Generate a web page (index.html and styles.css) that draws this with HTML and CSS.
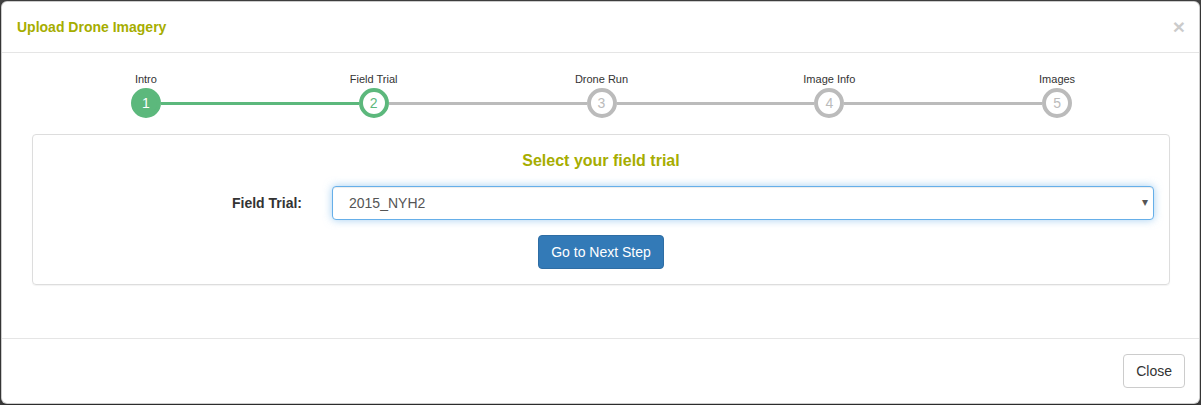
FILE: index.html
```html
<!DOCTYPE html>
<html>
<head>
<meta charset="utf-8">
<title>Upload Drone Imagery</title>
<link rel="stylesheet" href="styles.css">
</head>
<body>
<div class="modal">
  <div class="modal-header">
    <h4 class="modal-title">Upload Drone Imagery</h4>
    <button class="close" type="button">&times;</button>
  </div>
  <div class="modal-body">
    <div class="steps">
      <div class="step">
        <div class="step-label">Intro</div>
        <div class="track">
          <span class="seg seg-none"></span>
          <span class="dot dot-done">1</span>
          <span class="seg seg-green"></span>
        </div>
      </div>
      <div class="step">
        <div class="step-label">Field Trial</div>
        <div class="track">
          <span class="seg seg-green"></span>
          <span class="dot dot-active">2</span>
          <span class="seg seg-grey"></span>
        </div>
      </div>
      <div class="step">
        <div class="step-label">Drone Run</div>
        <div class="track">
          <span class="seg seg-grey"></span>
          <span class="dot">3</span>
          <span class="seg seg-grey"></span>
        </div>
      </div>
      <div class="step">
        <div class="step-label">Image Info</div>
        <div class="track">
          <span class="seg seg-grey"></span>
          <span class="dot">4</span>
          <span class="seg seg-grey"></span>
        </div>
      </div>
      <div class="step">
        <div class="step-label">Images</div>
        <div class="track">
          <span class="seg seg-grey"></span>
          <span class="dot">5</span>
          <span class="seg seg-none"></span>
        </div>
      </div>
    </div>
    <div class="panel">
      <h3 class="panel-heading">Select your field trial</h3>
      <div class="form-row">
        <label class="form-label">Field Trial:</label>
        <div class="form-field">
          <div class="select-wrap">
            <select class="select">
              <option>2015_NYH2</option>
            </select>
            <span class="caret">&#9662;</span>
          </div>
        </div>
      </div>
      <div class="actions">
        <button class="btn btn-primary" type="button">Go to Next Step</button>
      </div>
    </div>
  </div>
  <div class="modal-footer">
    <button class="btn btn-default" type="button">Close</button>
  </div>
</div>
</body>
</html>
```

FILE: styles.css
```css
* { box-sizing: border-box; }

html, body {
  margin: 0;
  padding: 0;
}

body {
  background: #454545;
  font-family: "Liberation Sans", Arial, Helvetica, sans-serif;
  font-size: 14px;
  line-height: 1.42857;
  color: #333;
  padding: 1px 1px 1px 1px;
  height: 405px;
  overflow: hidden;
}

.modal {
  background: #fff;
  border: 1px solid rgba(0, 0, 0, 0.2);
  border-radius: 6px;
  box-shadow: 0 3px 9px rgba(0, 0, 0, 0.5);
}

.modal-header {
  display: flex;
  align-items: center;
  justify-content: space-between;
  padding: 15px 14px 15px 15px;
  border-bottom: 1px solid #e5e5e5;
}

.modal-title {
  margin: 0;
  font-size: 14px;
  font-weight: bold;
  line-height: 20px;
  color: #a6ad00;
}

.close {
  border: 0;
  background: transparent;
  padding: 0;
  margin: 0;
  font-family: "Liberation Sans", Arial, sans-serif;
  font-size: 21px;
  font-weight: bold;
  line-height: 20px;
  color: #000;
  opacity: 0.2;
  cursor: pointer;
}

.modal-body {
  padding: 15px;
}

.steps {
  display: grid;
  grid-template-columns: repeat(5, 1fr);
  margin: 4px 13px 0 15px;
}

.step {
  display: flex;
  flex-direction: column;
  align-items: stretch;
}

.step-label {
  text-align: center;
  font-size: 11px;
  line-height: 14px;
  color: #333;
  margin-bottom: 2px;
}

.track {
  display: flex;
  align-items: center;
  height: 30px;
}

.seg {
  flex: 1;
  height: 3px;
}

.seg-none { background: transparent; }
.seg-green { background: #5cb87c; }
.seg-grey { background: #bbbbbb; }

.dot {
  width: 30px;
  height: 30px;
  flex: 0 0 30px;
  border-radius: 50%;
  border: 4px solid #bbbbbb;
  background: #fff;
  color: #bbbbbb;
  font-size: 14px;
  line-height: 22px;
  text-align: center;
}

.dot-done {
  background: #5cb87c;
  border-color: #5cb87c;
  color: #fff;
}

.dot-active {
  border-color: #5cb87c;
  color: #5cb87c;
}

.panel {
  margin: 16px 14px 38px 15px;
  border: 1px solid #dddddd;
  border-radius: 4px;
  padding: 15px 0;
  box-shadow: 0 1px 1px rgba(0, 0, 0, 0.05);
}

.panel-heading {
  margin: 0 0 14px;
  text-align: center;
  font-size: 16px;
  font-weight: bold;
  line-height: 22px;
  color: #a6ad00;
}

.form-row {
  display: grid;
  grid-template-columns: 25% 75%;
  align-items: center;
}

.form-label {
  text-align: right;
  font-weight: bold;
  padding: 0 15px;
  line-height: 20px;
}

.form-field {
  padding: 0 15px;
}

.select-wrap {
  position: relative;
}

.select {
  display: block;
  width: 100%;
  height: 34px;
  padding: 6px 30px 6px 16px;
  font-family: "Liberation Sans", Arial, sans-serif;
  font-size: 14px;
  color: #555;
  background: #fff;
  border: 1px solid #66afe9;
  border-radius: 4px;
  outline: 0;
  -webkit-appearance: none;
  appearance: none;
  box-shadow: inset 0 1px 1px rgba(0, 0, 0, 0.075), 0 0 8px rgba(102, 175, 233, 0.6);
}

.caret {
  position: absolute;
  right: 6px;
  top: 8px;
  font-size: 12px;
  line-height: 16px;
  color: #555;
  pointer-events: none;
}

.actions {
  display: flex;
  justify-content: center;
  margin-top: 15px;
}

.btn {
  display: inline-block;
  height: 34px;
  padding: 6px 12px;
  font-family: "Liberation Sans", Arial, sans-serif;
  font-size: 14px;
  line-height: 20px;
  border: 1px solid transparent;
  border-radius: 4px;
  cursor: pointer;
}

.btn-primary {
  color: #fff;
  background: #337ab7;
  border-color: #2e6da4;
}

.btn-default {
  color: #333;
  background: #fff;
  border-color: #ccc;
}

.modal-footer {
  display: flex;
  justify-content: flex-end;
  padding: 15px 14px 15px 15px;
  border-top: 1px solid #e5e5e5;
}
```
